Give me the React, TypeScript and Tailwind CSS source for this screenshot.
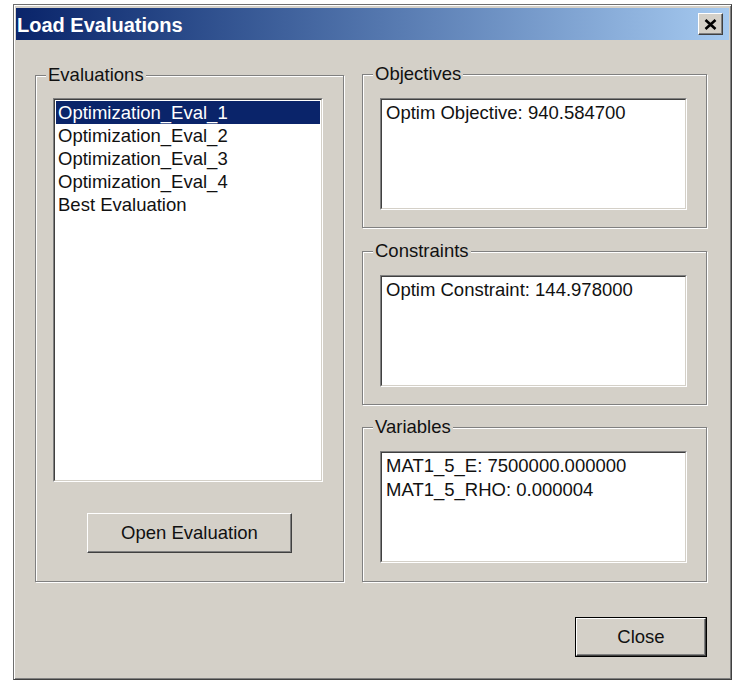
import React from 'react';

const evaluations = [
    'Optimization_Eval_1',
    'Optimization_Eval_2',
    'Optimization_Eval_3',
    'Optimization_Eval_4',
    'Best Evaluation'
];

// etched frame with a caption sitting on the top edge
const GroupBox = ({
    label,
    className,
    children
}: {
    label: string;
    className: string;
    children: React.ReactNode;
}) => (
    <div
        className={`relative border border-[#808080] shadow-[inset_1px_1px_0_#fff,1px_1px_0_#fff] ${className}`}
    >
        <span className="absolute left-[10px] top-[-12px] bg-[#d4d0c8] px-[2px] leading-[22px] text-[#111]">
            {label}
        </span>
        {children}
    </div>
);

// 2px sunken well used by the list and the read-only text boxes
const Sunken = ({
    className,
    children
}: {
    className: string;
    children: React.ReactNode;
}) => (
    <div
        className={`border border-t-[#808080] border-l-[#808080] border-r-white border-b-white ${className}`}
    >
        <div className="h-full border border-t-[#404040] border-l-[#404040] border-r-[#d4d0c8] border-b-[#d4d0c8] bg-white">
            {children}
        </div>
    </div>
);

const TextBox = ({ lines }: { lines: string[] }) => (
    <Sunken className="ml-[17px] mt-[23px] h-[112px] w-[307px]">
        <div className="pl-[4px] pt-[1px] leading-[24px] text-[#111]">
            {lines.map((l) => (
                <div key={l} className="whitespace-pre">
                    {l}
                </div>
            ))}
        </div>
    </Sunken>
);

const App = () => {
    return (
        <div
            className="min-h-screen bg-white pl-[13px] pt-[4px] text-[18.5px]"
            style={{ fontFamily: '"Liberation Sans", Arial, sans-serif' }}
        >
            <div className="flex h-[676px] w-[719px] flex-col border border-t-[#6e6e6e] border-l-[#6e6e6e] border-r-[#404040] border-b-[#404040] bg-[#d4d0c8] px-[2px] pt-[3px] shadow-[inset_1px_1px_0_#fff,inset_-1px_-1px_0_#808080]">
                {/* caption bar */}
                <div className="flex h-[32px] items-center justify-between bg-gradient-to-r from-[#0a246a] to-[#a6caf0] pl-[1px] pr-[6px]">
                    <span className="pt-[2px] text-[20px] font-bold text-white">
                        Load Evaluations
                    </span>
                    <button className="flex h-[22px] w-[25px] items-center justify-center border border-t-white border-l-white border-r-[#404040] border-b-[#404040] bg-[#d4d0c8] shadow-[inset_-1px_-1px_0_#808080]">
                        <svg width="13" height="11" viewBox="0 0 13 11">
                            <path
                                d="M1.5 1 L11.5 10 M11.5 1 L1.5 10"
                                stroke="#000"
                                strokeWidth="2.6"
                            />
                        </svg>
                    </button>
                </div>

                <div className="flex gap-[18px] pl-[19px] pt-[34px]">
                    <GroupBox label="Evaluations" className="mt-[1px] h-[507px] w-[309px]">
                        <Sunken className="ml-[17px] mt-[22px] h-[384px] w-[270px]">
                            <ul className="p-[1px] leading-[23px] text-[#111]">
                                {evaluations.map((e, idx) => (
                                    <li
                                        key={e}
                                        className={
                                            idx === 0
                                                ? 'bg-[#0a246a] pl-[2px] text-white'
                                                : 'pl-[2px]'
                                        }
                                    >
                                        {e}
                                    </li>
                                ))}
                            </ul>
                        </Sunken>
                        <div className="mt-[31px] flex justify-center">
                            <button className="h-[40px] w-[205px] border border-t-white border-l-white border-r-[#404040] border-b-[#404040] bg-[#d4d0c8] text-[#111] shadow-[inset_-1px_-1px_0_#808080]">
                                Open Evaluation
                            </button>
                        </div>
                    </GroupBox>

                    <div className="flex w-[345px] flex-col">
                        <GroupBox label="Objectives" className="h-[154px]">
                            <TextBox lines={['Optim Objective: 940.584700']} />
                        </GroupBox>
                        <GroupBox label="Constraints" className="mt-[23px] h-[154px]">
                            <TextBox lines={['Optim Constraint: 144.978000']} />
                        </GroupBox>
                        <GroupBox label="Variables" className="mt-[22px] h-[155px]">
                            <TextBox
                                lines={[
                                    'MAT1_5_E: 7500000.000000',
                                    'MAT1_5_RHO: 0.000004'
                                ]}
                            />
                        </GroupBox>
                    </div>
                </div>

                <div className="flex justify-end pr-[22px] pt-[35px]">
                    <div className="border border-black">
                        <button className="h-[38px] w-[130px] border border-t-white border-l-white border-r-[#404040] border-b-[#404040] bg-[#d4d0c8] text-[#111] shadow-[inset_-1px_-1px_0_#808080]">
                            Close
                        </button>
                    </div>
                </div>
            </div>
        </div>
    );
};

export default App;
